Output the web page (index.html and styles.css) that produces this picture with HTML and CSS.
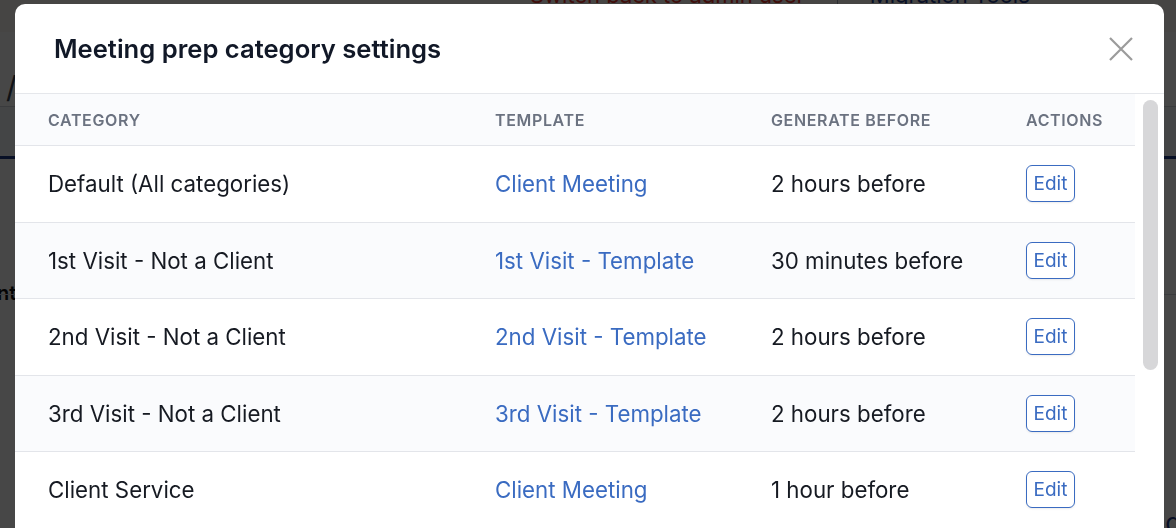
FILE: index.html
```html
<!DOCTYPE html>
<html>
<head>
<meta charset="utf-8">
<link rel="stylesheet" href="styles.css">
</head>
<body>
<div class="page">
  <div class="topbar">
    <span class="switch">Switch back to admin user</span>
    <span class="sep"></span>
    <span class="migr">Migration Tools</span>
  </div>
  <div class="crumbs"><span class="slash">/</span></div>
  <div class="tabs"></div>
  <div class="content">
    <div class="frag">Client</div>
    <div class="hr"></div>
  </div>
  <div class="foot">Edit</div>
</div>
<div class="overlay"></div>
<div class="modal">
  <div class="modal-head">
    <h2 class="title">Meeting prep category settings</h2>
    <button class="close" aria-label="Close">
      <svg width="24" height="24" viewBox="0 0 24 24"><path d="M1 1 L23 23 M23 1 L1 23" stroke="#9b9b9b" stroke-width="2.2" fill="none"/></svg>
    </button>
  </div>
  <div class="modal-body">
    <div class="table">
      <div class="row head">
        <div>Category</div><div>Template</div><div>Generate before</div><div>Actions</div>
      </div>
      <div class="row">
        <div>Default (All categories)</div><div class="link">Client Meeting</div><div>2 hours before</div><div><button class="edit">Edit</button></div>
      </div>
      <div class="row alt">
        <div>1st Visit - Not a Client</div><div class="link">1st Visit - Template</div><div>30 minutes before</div><div><button class="edit">Edit</button></div>
      </div>
      <div class="row">
        <div>2nd Visit - Not a Client</div><div class="link">2nd Visit - Template</div><div>2 hours before</div><div><button class="edit">Edit</button></div>
      </div>
      <div class="row alt">
        <div>3rd Visit - Not a Client</div><div class="link">3rd Visit - Template</div><div>2 hours before</div><div><button class="edit">Edit</button></div>
      </div>
      <div class="row">
        <div>Client Service</div><div class="link">Client Meeting</div><div>1 hour before</div><div><button class="edit">Edit</button></div>
      </div>
    </div>
    <div class="track"><div class="thumb"></div></div>
  </div>
</div>
</body>
</html>
```
FILE: styles.css
```css
* { box-sizing: border-box; }
html, body { margin: 0; padding: 0; }
body {
  width: 1176px;
  height: 528px;
  overflow: hidden;
  font-family: Inter, "Noto Sans", "Liberation Sans", sans-serif;
  background: #fff;
}
.page { width: 1176px; height: 528px; background: #fff; }
.topbar {
  background: #fbf6f3;
  display: flex;
  align-items: flex-end;
  padding-left: 530px;
  font-size: 22px;
  line-height: 22px;
  margin-top: -13px;
  height: 45px;
  padding-bottom: 26px;
}
.switch { color: #e2322a; }
.sep { width: 1px; height: 22px; background: #9ca3af; margin: 0 32px; }
.migr { color: #1d3a8a; }
.crumbs { height: 75px; padding: 38px 0 0 6px; font-size: 30px; line-height: 34px; color: #374151; border-bottom: 1px solid #d1d5db; }
.slash { display: inline-block; }
.tabs { height: 52px; background: #f3f6fa; border-bottom: 3px solid #1e3a8a; }
.content { position: relative; height: 360px; }
.frag { position: absolute; left: -40px; top: 122px; font-size: 20px; font-weight: 600; color: #111; }
.hr { position: absolute; left: 0; right: 0; top: 135px; border-top: 1px solid #d1d5db; }
.foot { position: absolute; right: -20px; bottom: -10px; font-size: 26px; color: #1e3a8a; }

.overlay {
  position: fixed;
  inset: 0;
  background: rgba(0, 0, 0, 0.72);
}
.modal {
  position: fixed;
  left: 15px;
  top: 4px;
  width: 1149px;
  height: 600px;
  background: #fff;
  border-radius: 10px;
  overflow: hidden;
}
.modal-head {
  height: 90px;
  border-bottom: 1px solid #e5e7eb;
  display: flex;
  align-items: center;
  justify-content: space-between;
  padding: 0 31px 0 39px;
}
.title {
  margin: 0;
  font-size: 25.6px;
  font-weight: 600;
  color: #111827;
}
.close {
  border: 0;
  background: none;
  padding: 0;
  width: 24px;
  height: 24px;
  margin-top: 1px;
  cursor: pointer;
}
.close svg { display: block; }
.modal-body { display: flex; }
.table { width: 1120px; }
.row {
  display: grid;
  grid-template-columns: 447px 276px 255px 1fr;
  align-items: center;
  padding-left: 33px;
  height: 76.5px;
  border-bottom: 1px solid #e3e5ea;
  font-size: 22.3px;
  color: #161a22;
}
.row.head {
  height: 52px;
  background: #fafbfd;
  font-size: 16px;
  font-weight: 600;
  letter-spacing: 0.04em;
  text-transform: uppercase;
  color: #6b7280;
  padding-top: 1px;
}
.row.alt { background: #fafbfd; }
.link { color: #3a6bc1; }
.edit {
  font-family: inherit;
  font-size: 19px;
  color: #3a6bc1;
  background: #fff;
  border: 1px solid #3a6bc1;
  border-radius: 6px;
  height: 37px;
  width: 49px;
  padding: 0;
  box-shadow: 0 1px 2px rgba(0, 0, 0, 0.08);
}
.track { flex: 1; padding: 6px 0 0 8px; }
.thumb { width: 15px; height: 270px; background: #d7d7d9; border-radius: 8px; }
```
